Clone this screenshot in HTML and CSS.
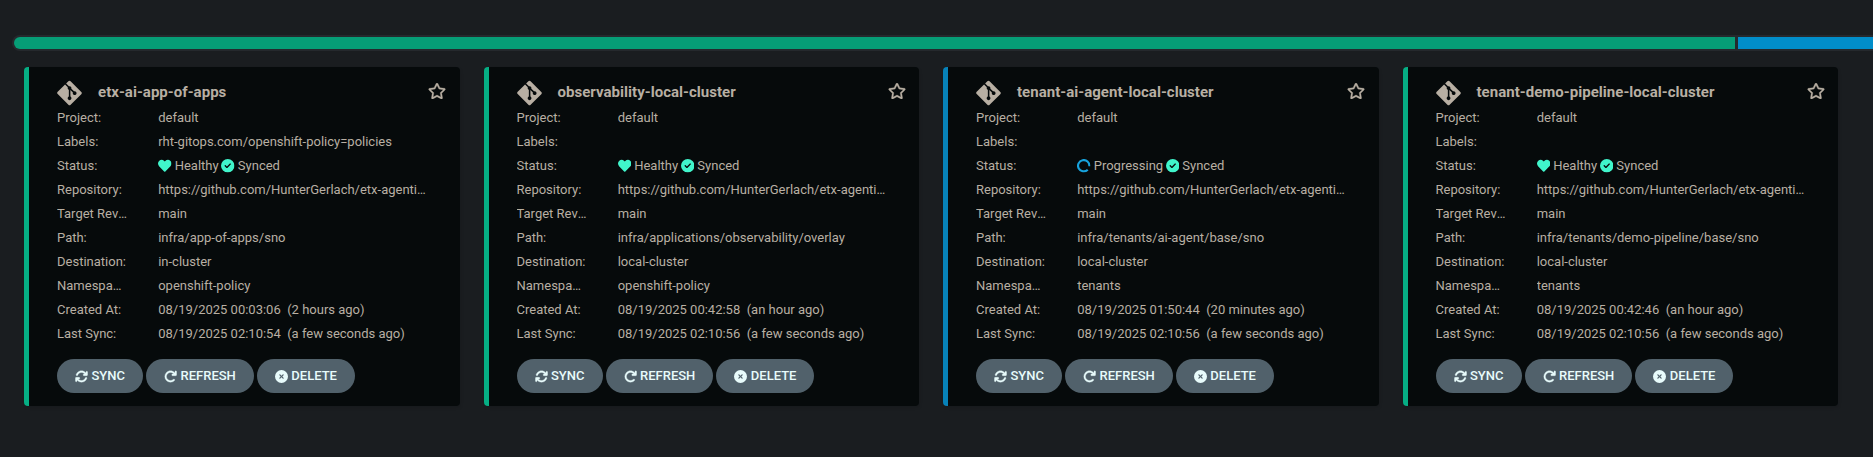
FILE: index.html
```html
<!DOCTYPE html>
<html lang="en">
<head>
<meta charset="utf-8">
<title>Applications</title>
<link rel="stylesheet" href="styles.css">
</head>
<body>
<svg class="sprite" aria-hidden="true">
  <symbol id="git" viewBox="0 0 448 512"><path d="M439.550 236.050L244 40.450a28.870 28.870 0 0 0-40.810 0l-40.660 40.630 51.520 51.520c27.060-9.140 52.680 16.770 43.390 43.680l49.660 49.660c34.230-11.800 61.180 31 35.470 56.690-26.490 26.490-70.210-2.870-56-37.340L240.220 199v121.850c25.300 12.540 22.260 41.850 9.080 55a34.340 34.340 0 0 1-48.550 0c-17.570-17.600-11.070-46.910 11.250-56v-123c-20.800-8.510-24.600-30.740-18.640-45L142.570 101 8.450 235.140a28.860 28.860 0 0 0 0 40.810l195.610 195.600a28.860 28.860 0 0 0 40.800 0l194.690-194.690a28.860 28.860 0 0 0 0-40.810z"/></symbol>
  <symbol id="star" viewBox="0 0 576 512"><path stroke="currentColor" stroke-width="10" d="M528.100 171.500L382 150.200 316.700 17.800c-11.700-23.600-45.600-23.900-57.400 0L194 150.200 47.900 171.500c-26.200 3.800-36.700 36.100-17.700 54.600l105.700 103-25 145.500c-4.500 26.300 23.200 46 46.400 33.700L288 439.600l130.700 68.700c23.200 12.200 50.900-7.400 46.400-33.700l-25-145.500 105.700-103c19-18.500 8.500-50.800-17.700-54.600zM388.600 312.300l23.700 138.400L288 385.400l-124.300 65.300 23.700-138.400-100.600-98 139-20.200 62.200-126 62.200 126 139 20.200-100.600 98z"/></symbol>
  <symbol id="heart" viewBox="0 0 512 512"><path d="M462.300 62.600C407.500 15.900 326 24.300 275.700 76.200L256 96.500l-19.700-20.300C186.100 24.300 104.500 15.900 49.700 62.600c-62.800 53.600-66.100 149.800-9.900 207.900l193.500 199.800c12.500 12.900 32.800 12.900 45.300 0l193.500-199.800c56.300-58.100 53-154.300-9.800-207.900z"/></symbol>
  <symbol id="check" viewBox="0 0 512 512"><path d="M256 0a256 256 0 1 0 0 512 256 256 0 1 0 0-512zM369 209L241 337c-9.400 9.400-24.600 9.400-33.900 0l-64-64c-9.400-9.400-9.400-24.600 0-33.900s24.600-9.400 33.900 0l47 47L335 175c9.400-9.400 24.600-9.400 33.900 0s9.400 24.600 0 33.900z"/></symbol>
  <symbol id="progress" viewBox="0 0 512 512"><path d="M408 408A215 215 0 1 1 470 275" fill="none" stroke="currentColor" stroke-width="82"/></symbol>
  <symbol id="sync" viewBox="0 0 512 512"><path stroke="currentColor" stroke-width="12" d="M105.100 202.600c7.700-21.800 20.200-42.300 37.800-59.800 62.500-62.500 163.800-62.500 226.300 0L386.300 160H352c-17.700 0-32 14.300-32 32s14.300 32 32 32h111.500c17.700 0 32-14.300 32-32V80c0-17.700-14.300-32-32-32s-32 14.300-32 32v35.200L414.400 97.600c-87.500-87.500-229.300-87.500-316.800 0-24.400 24.400-42 53.100-52.800 83.800-5.900 16.700 2.900 34.900 19.500 40.800s34.900-2.900 40.800-19.500zM39 289.300c-4.800 1.400-9.400 4.200-13 8-4 4-6.700 8.700-8.100 14-1 4-1.400 6-1.400 8V432c0 17.700 14.300 32 32 32s32-14.300 32-32v-35.100l17.600 17.500c87.500 87.400 229.300 87.400 316.700 0 24.400-24.400 42.100-53.100 52.900-83.700 5.900-16.700-2.900-34.900-19.500-40.800s-34.900 2.900-40.800 19.500c-7.700 21.800-20.200 42.300-37.800 59.800-62.500 62.500-163.800 62.500-226.300 0L125.600 352H160c17.700 0 32-14.300 32-32s-14.300-32-32-32H48.400c-3 0-6 .4-9.400 1.300z"/></symbol>
  <symbol id="refresh" viewBox="0 0 512 512"><path stroke="currentColor" stroke-width="12" d="M386.300 160H336c-17.700 0-32 14.300-32 32s14.300 32 32 32h128c17.700 0 32-14.300 32-32V64c0-17.700-14.300-32-32-32s-32 14.300-32 32v51.200L414.400 97.600c-87.500-87.500-229.300-87.500-316.800 0s-87.500 229.300 0 316.800 229.300 87.500 316.800 0c12.500-12.500 12.500-32.800 0-45.300s-32.800-12.500-45.300 0c-62.500 62.500-163.800 62.500-226.300 0s-62.500-163.800 0-226.300 163.800-62.500 226.300 0L386.300 160z"/></symbol>
  <symbol id="delete" viewBox="0 0 512 512"><path d="M256 0a256 256 0 1 0 0 512 256 256 0 1 0 0-512zM175 175c9.400-9.400 24.600-9.400 33.900 0l47 47 47-47c9.400-9.400 24.600-9.400 33.900 0s9.400 24.600 0 33.900l-47 47 47 47c9.400 9.400 9.400 24.600 0 33.900s-24.600 9.400-33.900 0l-47-47-47 47c-9.400 9.400-24.600 9.400-33.900 0s-9.400-24.600 0-33.900l47-47-47-47c-9.400-9.400-9.400-24.600 0-33.900z"/></symbol>
</svg>
<div class="statusbar"><div class="statusbar-healthy"></div><div class="statusbar-progressing"></div></div>
<main class="tiles" id="tiles"></main>
<script src="app.js"></script>
</body>
</html>
```

FILE: styles.css
```css
* { box-sizing: border-box; }
html { background: #1a1d20; }
body {
  display: flow-root;
  margin: 0;
  height: 457px;
  overflow: hidden;
  background: #1a1d20;
  color: #b8afa3;
  font: 13px/24px Roboto, sans-serif;
}
.sprite { display: none; }
svg { flex: none; fill: currentColor; }
.statusbar {
  display: flex;
  gap: 3px;
  height: 16px;
  margin: 35px -20px 0 12px;
  padding: 2px;
  border-radius: 8px;
  background: #25292d;
}
.statusbar-healthy { width: 1721px; border-radius: 6px 0 0 6px; background: #069d76; }
.statusbar-progressing { flex: 1; background: #018dc9; }
.tiles {
  display: grid;
  grid-template-columns: repeat(4, 1fr);
  gap: 24px;
  width: 1814px;
  margin: 16px 0 0 24px;
}
.tile {
  height: 339px;
  padding: 12px 13.500px 0 28px;
  border-left: 5px solid #06ae84;
  border-radius: 4px;
  background: #060a0b;
  box-shadow: 1px 2px 3px rgba(0, 0, 0, .1);
}
.tile-progressing { border-left-color: #0782b9; }
.tile-head { display: flex; align-items: center; height: 27px; }
.icon-git { width: 25px; height: 28px; margin-right: 16px; }
.tile-title { flex: 1; margin: 0 0 1px; font-size: 15px; font-weight: 700; letter-spacing: .03px; }
.icon-star { width: 18px; height: 16px; margin-bottom: 3px; }
.row { display: flex; height: 24px; }
.label, .value { overflow: hidden; white-space: nowrap; text-overflow: ellipsis; }
.label { width: 70px; margin-right: 31.200px; }
.value { width: 269px; white-space: pre; }
.status { display: flex; align-items: center; }
.status svg { width: 13.500px; height: 13.500px; margin-right: 3px; }
.status svg { color: #40f5cb; }
.status svg.spin { color: #17a2dc; }
.status span { margin-right: 2.700px; }
.actions { display: flex; gap: 3px; margin-top: 13px; }
.button {
  display: flex;
  align-items: center;
  height: 34px;
  padding: 0 18px;
  border: 0;
  border-radius: 17px;
  background: #51616b;
  color: #e8fbfb;
  font: 500 13px/34px Roboto, sans-serif;
}
.button svg { width: 13px; height: 13px; margin-right: 3.500px; }
```

FILE: app.js
```js
const repo = 'https://github.com/HunterGerlach/etx-agentic-ai-gitops';
const apps = [
  ['etx-ai-app-of-apps', 'rht-gitops.com/openshift-policy=policies', 'Healthy', 'infra/app-of-apps/sno', 'in-cluster', 'openshift-policy', '08/19/2025 00:03:06  (2 hours ago)', '08/19/2025 02:10:54  (a few seconds ago)'],
  ['observability-local-cluster', '', 'Healthy', 'infra/applications/observability/overlay', 'local-cluster', 'openshift-policy', '08/19/2025 00:42:58  (an hour ago)', '08/19/2025 02:10:56  (a few seconds ago)'],
  ['tenant-ai-agent-local-cluster', '', 'Progressing', 'infra/tenants/ai-agent/base/sno', 'local-cluster', 'tenants', '08/19/2025 01:50:44  (20 minutes ago)', '08/19/2025 02:10:56  (a few seconds ago)'],
  ['tenant-demo-pipeline-local-cluster', '', 'Healthy', 'infra/tenants/demo-pipeline/base/sno', 'local-cluster', 'tenants', '08/19/2025 00:42:46  (an hour ago)', '08/19/2025 02:10:56  (a few seconds ago)']
];
const icon = (name, cls = '') => `<svg class="${cls}"><use href="#${name}"/></svg>`;
const row = (label, value, cls = '') => `<div class="row"><div class="label">${label}</div><div class="value ${cls}">${value}</div></div>`;
const button = (name, text) => `<button class="button button-${name}">${icon(name)}${text}</button>`;

document.getElementById('tiles').innerHTML = apps.map(([title, labels, health, path, dest, ns, created, synced]) => {
  const busy = health === 'Progressing';
  const healthIcon = busy ? icon('progress', 'spin') : icon('heart');
  return `<article class="tile ${busy ? 'tile-progressing' : ''}">
    <div class="tile-head">${icon('git', 'icon-git')}<h2 class="tile-title">${title}</h2>${icon('star', 'icon-star')}</div>
    ${row('Project:', 'default')}
    ${row('Labels:', labels)}
    ${row('Status:', `${healthIcon}<span>${health}</span>${icon('check')}<span>Synced</span>`, 'status')}
    ${row('Repository:', repo)}
    ${row('Target Revision:', 'main')}
    ${row('Path:', path)}
    ${row('Destination:', dest)}
    ${row('Namespace:', ns)}
    ${row('Created At:', created)}
    ${row('Last Sync:', synced)}
    <div class="actions">${button('sync', 'SYNC')}${button('refresh', 'REFRESH')}${button('delete', 'DELETE')}</div>
  </article>`;
}).join('');
```
